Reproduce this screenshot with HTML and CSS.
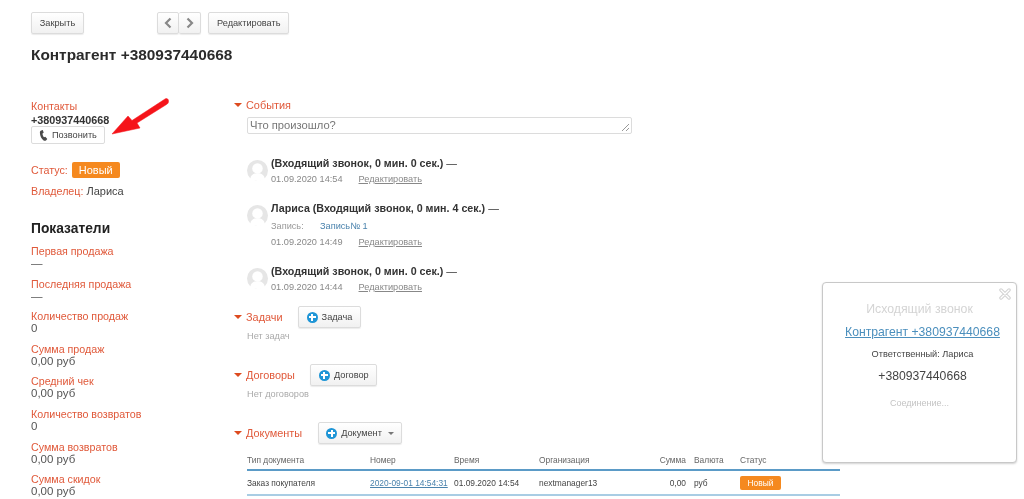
FILE: index.html
```html
<!DOCTYPE html>
<html lang="ru">
  <head>
    <meta charset="UTF-8" />
    <title>Контрагент +380937440668</title>
    <link rel="stylesheet" href="styles.css">
  </head>
  <body>
    <div class="page">
    <div class="toolbar">
      <button class="btn btn-close">Закрыть</button>
      <div class="btn-pair">
        <button class="btn btn-arrow">
          <svg width="8" height="12" viewBox="0 0 8 12"><path d="M6.500 1.500 2 6l4.500 4.500" fill="none" stroke="#888" stroke-width="2.200"/></svg>
        </button>
        <button class="btn btn-arrow">
          <svg width="8" height="12" viewBox="0 0 8 12"><path d="M1.500 1.500 6 6l-4.500 4.500" fill="none" stroke="#888" stroke-width="2.200"/></svg>
        </button>
      </div>
      <button class="btn">Редактировать</button>
    </div>

    <h1>Контрагент +380937440668</h1>

    <div class="columns">
      <div class="sidebar">
        <div class="label">Контакты</div>
        <div class="phone">+380937440668</div>
        <button class="btn btn-call">
          <svg width="9" height="11" viewBox="0 0 9 11"><path d="M2.200.5 3.800 0l.9 2.700-1.200.8c0 1.300.6 2.800 1.500 3.800l1.300-.5L8.300 9 7 10.400c-.6.500-1.500.7-2.400 0C2.400 8.700.8 5.800.9 2.500c0-.9.500-1.600 1.300-2z" fill="#4a4a4a"/></svg>
          Позвонить
        </button>
        <div class="status-row">
          <span class="label">Статус:</span>
          <span class="badge">Новый</span>
        </div>
        <div class="owner-row"><span class="label">Владелец:</span> Лариса</div>

        <h2>Показатели</h2>
        <div class="metric"><div class="label">Первая продажа</div><div>—</div></div>
        <div class="metric"><div class="label">Последняя продажа</div><div>—</div></div>
        <div class="metric"><div class="label">Количество продаж</div><div>0</div></div>
        <div class="metric"><div class="label">Сумма продаж</div><div>0,00 руб</div></div>
        <div class="metric"><div class="label">Средний чек</div><div>0,00 руб</div></div>
        <div class="metric"><div class="label">Количество возвратов</div><div>0</div></div>
        <div class="metric"><div class="label">Сумма возвратов</div><div>0,00 руб</div></div>
        <div class="metric"><div class="label">Сумма скидок</div><div>0,00 руб</div></div>
      </div>

      <div class="main">
        <div class="section-head events-head"><span class="caret"></span><span class="label">События</span></div>
        <div class="textarea">Что произошло?
          <svg class="grip" width="9" height="9" viewBox="0 0 9 9"><path d="M1 8l7-7M5 8l3-3" stroke="#999" fill="none"/></svg>
        </div>

        <div class="event">
          <div class="avatar"><svg width="21" height="21" viewBox="0 0 20 20"><circle cx="10" cy="10" r="10" fill="#e6e6e6"/><circle cx="10" cy="8" r="5" fill="#fff"/><path d="M3 18.500c.5-4.500 3-6 7-6s6.500 1.500 7 6c-4 2-10 2-14 0z" fill="#fff"/></svg></div>
          <div>
            <div class="event-title">(Входящий звонок, 0 мин. 0 сек.) <span class="dash">—</span></div>
            <div class="event-meta"><span class="event-time">01.09.2020 14:54</span><a class="edit-link">Редактировать</a></div>
          </div>
        </div>

        <div class="event">
          <div class="avatar"><svg width="21" height="21" viewBox="0 0 20 20"><circle cx="10" cy="10" r="10" fill="#e6e6e6"/><circle cx="10" cy="8" r="5" fill="#fff"/><path d="M3 18.500c.5-4.500 3-6 7-6s6.500 1.500 7 6c-4 2-10 2-14 0z" fill="#fff"/></svg></div>
          <div>
            <div class="event-title">Лариса (Входящий звонок, 0 мин. 4 сек.) <span class="dash">—</span></div>
            <div class="event-record"><span class="record-label">Запись:</span><span class="record-link">Запись№ 1</span></div>
            <div class="event-meta"><span class="event-time">01.09.2020 14:49</span><a class="edit-link">Редактировать</a></div>
          </div>
        </div>

        <div class="event">
          <div class="avatar"><svg width="21" height="21" viewBox="0 0 20 20"><circle cx="10" cy="10" r="10" fill="#e6e6e6"/><circle cx="10" cy="8" r="5" fill="#fff"/><path d="M3 18.500c.5-4.500 3-6 7-6s6.500 1.500 7 6c-4 2-10 2-14 0z" fill="#fff"/></svg></div>
          <div>
            <div class="event-title">(Входящий звонок, 0 мин. 0 сек.) <span class="dash">—</span></div>
            <div class="event-meta"><span class="event-time">01.09.2020 14:44</span><a class="edit-link">Редактировать</a></div>
          </div>
        </div>

        <div class="section-head">
          <span class="caret"></span><span class="label head-label">Задачи</span>
          <button class="btn btn-add"><span class="plus"></span>Задача</button>
        </div>
        <div class="empty">Нет задач</div>

        <div class="section-head">
          <span class="caret"></span><span class="label head-label">Договоры</span>
          <button class="btn btn-add"><span class="plus"></span>Договор</button>
        </div>
        <div class="empty">Нет договоров</div>

        <div class="section-head">
          <span class="caret"></span><span class="label head-label">Документы</span>
          <button class="btn btn-add"><span class="plus"></span>Документ<span class="btn-caret"></span></button>
        </div>

        <table class="docs">
          <thead>
            <tr>
              <th class="col-type">Тип документа</th>
              <th class="col-num">Номер</th>
              <th class="col-time">Время</th>
              <th class="col-org">Организация</th>
              <th class="col-sum">Сумма</th>
              <th class="col-cur">Валюта</th>
              <th class="col-status">Статус</th>
            </tr>
          </thead>
          <tbody>
            <tr>
              <td>Заказ покупателя</td>
              <td><a class="doc-link">2020-09-01 14:54:31</a></td>
              <td>01.09.2020 14:54</td>
              <td>nextmanager13</td>
              <td class="col-sum">0,00</td>
              <td>руб</td>
              <td><span class="badge badge-small">Новый</span></td>
            </tr>
          </tbody>
        </table>
      </div>
    </div>

    <!-- red annotation arrow -->
    <svg class="arrow" width="60" height="44" viewBox="0 0 60 44"><path d="M55 1c2-1 3.500 0 3.500 2s-.5 2.500-2 3.500L27 25l3 5L2 36l16-18 4 4.500z" fill="#f5141a" stroke="#f5141a" stroke-width="0.500" stroke-linejoin="round"/></svg>

    <div class="call-popup">
      <svg class="popup-close" width="12" height="12" viewBox="0 0 12 12"><path d="M2 2l8 8M10 2l-8 8" stroke="#d4d4d4" stroke-width="3.500" stroke-linecap="round" fill="none"/><path d="M2 2l8 8M10 2l-8 8" stroke="#fff" stroke-width="1.200" stroke-linecap="round" fill="none"/></svg>
      <div class="popup-title">Исходящий звонок</div>
      <a class="popup-link">Контрагент +380937440668</a>
      <div class="popup-owner">Ответственный: Лариса</div>
      <div class="popup-phone">+380937440668</div>
      <div class="popup-state">Соединение...</div>
    </div>
    </div>
  </body>
</html>
```

FILE: styles.css
```css
html,
body {
  height: 499px;
  margin: 0;
  overflow: hidden;
  background: #fff;
}

.page {
  position: relative;
  height: 499px;
  padding: 12px 0 0 31px;
  box-sizing: border-box;
  overflow: hidden;
  font-family: "Liberation Sans", Arial, sans-serif;
  font-size: 12px;
  color: #333;
  background: #fff;
  filter: blur(0.7px);
}

.btn {
  height: 22px;
  padding: 0 8px;
  font-family: inherit;
  font-size: 9.200px;
  color: #444;
  background: linear-gradient(#fff, #f1f1f1);
  border: 1px solid #dcdcdc;
  border-radius: 2px;
  box-shadow: 0 1px 1px rgba(0, 0, 0, 0.08);
}

.toolbar {
  display: flex;
  align-items: center;
}

.btn-close {
  width: 53px;
  padding: 0;
  margin-right: 73px;
}

.btn-pair {
  display: flex;
  margin-right: 7px;
}

.btn-arrow {
  width: 22px;
  padding: 0;
  display: flex;
  align-items: center;
  justify-content: center;
}

.btn-arrow + .btn-arrow {
  border-left: 0;
}

h1 {
  margin: 11px 0 0;
  font-size: 15.400px;
  line-height: 20px;
  color: #2b2b2b;
}

.columns {
  display: flex;
  margin-top: 33px;
}

.sidebar {
  width: 203px;
  flex: none;
  padding-top: 2px;
  line-height: 12px;
}

.label {
  color: #e0593a;
  font-size: 10.700px;
}

.phone {
  margin-top: 2px;
  font-size: 10.800px;
  font-weight: bold;
}

.btn-call {
  display: flex;
  align-items: center;
  gap: 4px;
  width: 74px;
  height: 18px;
  margin-top: 0;
  padding: 0 0 0 7px;
  background: #fff;
  box-shadow: none;
}

.status-row {
  display: flex;
  align-items: center;
  gap: 4px;
  margin-top: 18px;
}

.badge {
  padding: 0 7px;
  line-height: 16px;
  font-size: 11px;
  color: #fff;
  background: #f5891f;
  border-radius: 2px;
}

.owner-row {
  margin-top: 7px;
  font-size: 11px;
  color: #444;
}

h2 {
  margin: 23px 0 8px;
  font-size: 13.800px;
  line-height: 17px;
  color: #222;
}

.metric {
  height: 32.600px;
  font-size: 11.500px;
  color: #555;
}

.main {
  flex: 1;
}

.main .label {
  font-size: 10.900px;
}

.section-head {
  display: flex;
  align-items: center;
  height: 22px;
  margin-top: 22px;
}

.events-head {
  height: 14px;
  margin-top: 0;
}

.event + .section-head {
  margin-top: 12px;
}

.caret {
  width: 0;
  height: 0;
  margin-right: 4px;
  border-left: 4px solid transparent;
  border-right: 4px solid transparent;
  border-top: 4px solid #dd4b1f;
}

.head-label {
  margin-right: 15.500px;
}

.textarea {
  position: relative;
  width: 379px;
  height: 13px;
  margin: 5px 0 0 13px;
  padding: 1px 2px;
  font-size: 11.200px;
  line-height: 13px;
  color: #777;
  border: 1px solid #dcdcdc;
  border-radius: 2px;
}

.grip {
  position: absolute;
  right: 1px;
  bottom: 1px;
}

.event {
  display: flex;
  gap: 3px;
  margin: 15px 0 0 13px;
}

.textarea + .event {
  margin-top: 22px;
}

.avatar {
  margin-top: 4px;
}

.event-title {
  font-size: 10.700px;
  line-height: 14px;
  font-weight: bold;
  color: #333;
}

.dash {
  font-weight: normal;
}

.event-meta {
  margin-top: 2px;
  font-size: 9.200px;
  line-height: 14px;
  color: #888;
}

.event-time {
  margin-right: 16px;
}

.edit-link {
  color: #888;
  text-decoration: underline;
}

.event-record {
  margin-top: 4px;
  font-size: 9.200px;
  line-height: 14px;
}

.record-label {
  display: inline-block;
  width: 49px;
  color: #999;
}

.record-link {
  color: #4b83ad;
}

.btn-add {
  display: flex;
  align-items: center;
  gap: 4px;
  padding: 0 7.500px;
}

.plus {
  position: relative;
  width: 11px;
  height: 11px;
  border-radius: 50%;
  background: #1e95d6;
}

.plus::before,
.plus::after {
  content: "";
  position: absolute;
  background: #fff;
}

.plus::before {
  left: 2px;
  top: 4.500px;
  width: 7px;
  height: 2px;
}

.plus::after {
  left: 4.500px;
  top: 2px;
  width: 2px;
  height: 7px;
}

.btn-caret {
  width: 0;
  height: 0;
  margin-left: 2px;
  border-left: 3px solid transparent;
  border-right: 3px solid transparent;
  border-top: 3px solid #777;
}

.empty {
  margin: 2px 0 0 13px;
  font-size: 9.200px;
  line-height: 12px;
  color: #aaa;
}

.docs {
  width: 593px;
  margin: 7px 0 0 13px;
  table-layout: fixed;
  border-collapse: collapse;
  font-size: 8.400px;
  color: #444;
}

.docs th {
  height: 18px;
  padding: 0;
  text-align: left;
  font-weight: normal;
  color: #666;
  border-bottom: 2px solid #5b9bc7;
}

.docs td {
  height: 23px;
  padding: 0;
  border-bottom: 2px solid #a9cde4;
}

.col-type { width: 123px; }
.col-num { width: 84px; }
.col-time { width: 85px; }
.col-org { width: 110px; }
.col-cur { width: 46px; }
.col-status { width: 100px; }

.docs .col-sum {
  width: 37px;
  padding-right: 8px;
  text-align: right;
}

.doc-link {
  color: #4b83ad;
  text-decoration: underline;
}

.badge-small {
  display: inline-block;
  width: 41px;
  padding: 0;
  line-height: 14px;
  font-size: 8.400px;
  text-align: center;
}

.arrow {
  position: absolute;
  left: 110px;
  top: 98px;
}

.call-popup {
  position: absolute;
  left: 822px;
  top: 282px;
  width: 195px;
  height: 181px;
  padding-top: 19px;
  box-sizing: border-box;
  text-align: center;
  background: #fff;
  border: 1px solid #c8c8c8;
  border-radius: 4px;
  box-shadow: 0 1px 2px rgba(0, 0, 0, 0.18);
}

.popup-close {
  position: absolute;
  right: 5px;
  top: 5px;
}

.popup-title {
  font-size: 12.300px;
  line-height: 14px;
  color: #d4d4d4;
}

.popup-link {
  display: block;
  margin-top: 9px;
  padding-left: 6px;
  font-size: 12.200px;
  line-height: 15px;
  color: #4b8fbd;
  text-decoration: underline;
}

.popup-owner {
  margin-top: 8px;
  padding-left: 6px;
  font-size: 9.200px;
  line-height: 12px;
  color: #444;
}

.popup-phone {
  margin-top: 8px;
  padding-left: 6px;
  font-size: 12.200px;
  line-height: 16px;
  color: #444;
}

.popup-state {
  margin-top: 13px;
  font-size: 9px;
  line-height: 12px;
  color: #c4c4c4;
}
```
